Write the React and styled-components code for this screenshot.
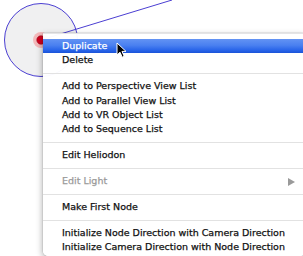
import React from "react";
import styled, { createGlobalStyle } from "styled-components";

const Global = createGlobalStyle`
  html, body { margin: 0; padding: 0; background: #ffffff; overflow: hidden; }
  #root { width: 303px; height: 256px; }
`;

const Canvas = styled.div`
  position: relative;
  width: 303px;
  height: 256px;
  overflow: hidden;
  background: #ffffff;
  font-family: "DejaVu Sans", "Lucida Grande", sans-serif;
`;

const Drawing = styled.svg`
  display: block;
`;

const Menu = styled.div`
  position: absolute;
  left: 43px;
  top: 33px;
  width: 262px;
  padding: 5px 0 1px;
  background: rgba(255, 255, 255, 0.97);
  border-top: 1px solid #e4e4e6;
  border-radius: 0 0 5px 5px;
  box-shadow: -1px 2px 6px rgba(0, 0, 0, 0.28), 0 0 0 0.5px rgba(0, 0, 0, 0.12);
  display: flex;
  flex-direction: column;
`;

const Row = styled.div`
  height: 14.3px;
  line-height: 14.3px;
  padding: 0 10px 0 19px;
  display: flex;
  align-items: center;
  font-size: 9.5px;
  white-space: nowrap;
  -webkit-text-stroke: 0.25px currentColor;
  color: ${(p) => (p.$disabled ? "#9a9a9a" : p.$active ? "#ffffff" : "#111111")};
  background: ${(p) =>
    p.$active
      ? "linear-gradient(to bottom, #6393f3 0%, #4a80f0 45%, #2864e9 80%, #1a53d8 100%)"
      : "transparent"};
`;

const Label = styled.span`
  flex: 1;
`;

const Arrow = styled.span`
  width: 0;
  height: 0;
  margin-top: 1px;
  border-top: 4px solid transparent;
  border-bottom: 4px solid transparent;
  border-left: 7px solid #9a9a9a;
`;

const Separator = styled.div`
  height: 11.7px;
  display: flex;
  align-items: center;
  &::after {
    content: "";
    flex: 1;
    height: 1px;
    background: #e2e2e2;
  }
`;

const Cursor = styled.svg`
  position: absolute;
  left: 116px;
  top: 42px;
`;

const items = [
  { label: "Duplicate", active: true },
  { label: "Delete" },
  "sep",
  { label: "Add to Perspective View List" },
  { label: "Add to Parallel View List" },
  { label: "Add to VR Object List" },
  { label: "Add to Sequence List" },
  "sep",
  { label: "Edit Heliodon" },
  "sep",
  { label: "Edit Light", disabled: true, submenu: true },
  "sep",
  { label: "Make First Node" },
  "sep",
  { label: "Initialize Node Direction with Camera Direction" },
  { label: "Initialize Camera Direction with Node Direction" },
];

export default function App() {
  return (
    <>
      <Global />
      <Canvas>
        <Drawing width="303" height="256" viewBox="0 0 303 256">
          <circle cx="41" cy="40" r="36.5" fill="#f0f0f1" stroke="#4b3fd2" strokeWidth="1" />
          <line x1="44" y1="39" x2="172" y2="0" stroke="#4b3fd2" strokeWidth="1" />
          <circle cx="41" cy="40" r="8" fill="#f3b9bb" />
          <circle cx="41" cy="40" r="4.2" fill="#d3001e" stroke="#9a0010" strokeWidth="0.6" />
        </Drawing>
        <Menu>
          {items.map((it, i) =>
            it === "sep" ? (
              <Separator key={i} />
            ) : (
              <Row key={i} $active={it.active} $disabled={it.disabled}>
                <Label>{it.label}</Label>
                {it.submenu && <Arrow />}
              </Row>
            )
          )}
        </Menu>
        <Cursor width="12" height="17" viewBox="0 0 12 17">
          <path
            d="M1 1 L1 13 L4 10.2 L6.2 15.2 L8.2 14.3 L6 9.4 L10 9.4 Z"
            fill="#000"
            stroke="#fff"
            strokeWidth="1"
            strokeLinejoin="round"
          />
        </Cursor>
      </Canvas>
    </>
  );
}
